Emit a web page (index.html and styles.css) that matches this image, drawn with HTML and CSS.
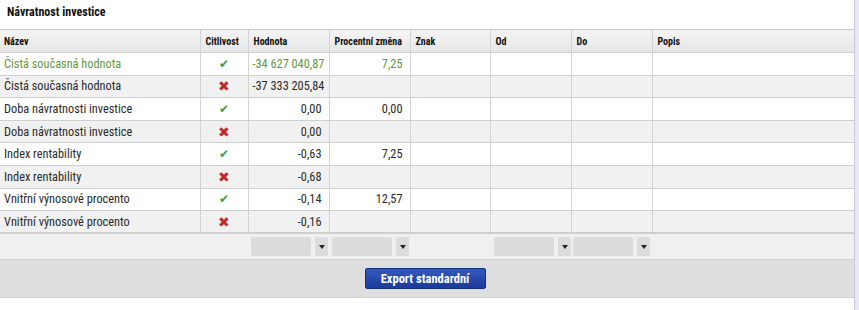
FILE: index.html
```html
<!DOCTYPE html>
<html lang="cs">
<head>
<meta charset="utf-8">
<link rel="stylesheet" href="styles.css">
</head>
<body>
<div class="page">
  <div class="panel">
    <h1 class="title">Návratnost investice</h1>
    <table class="grid">
      <colgroup>
        <col class="c-name"><col class="c-cit"><col class="c-val"><col class="c-pct"><col class="c-znak"><col class="c-od"><col class="c-do"><col class="c-popis">
      </colgroup>
      <thead>
        <tr><th>Název</th><th>Citlivost</th><th>Hodnota</th><th>Procentní změna</th><th>Znak</th><th>Od</th><th>Do</th><th>Popis</th></tr>
      </thead>
      <tbody>
        <tr class="hl"><td>Čistá současná hodnota</td><td class="ic"><span class="ok">✔</span></td><td class="num">-34 627 040,87</td><td class="num">7,25</td><td></td><td></td><td></td><td></td></tr>
        <tr><td>Čistá současná hodnota</td><td class="ic"><span class="no">✖</span></td><td class="num">-37 333 205,84</td><td class="num"></td><td></td><td></td><td></td><td></td></tr>
        <tr><td>Doba návratnosti investice</td><td class="ic"><span class="ok">✔</span></td><td class="num">0,00</td><td class="num">0,00</td><td></td><td></td><td></td><td></td></tr>
        <tr><td>Doba návratnosti investice</td><td class="ic"><span class="no">✖</span></td><td class="num">0,00</td><td class="num"></td><td></td><td></td><td></td><td></td></tr>
        <tr><td>Index rentability</td><td class="ic"><span class="ok">✔</span></td><td class="num">-0,63</td><td class="num">7,25</td><td></td><td></td><td></td><td></td></tr>
        <tr><td>Index rentability</td><td class="ic"><span class="no">✖</span></td><td class="num">-0,68</td><td class="num"></td><td></td><td></td><td></td><td></td></tr>
        <tr><td>Vnitřní výnosové procento</td><td class="ic"><span class="ok">✔</span></td><td class="num">-0,14</td><td class="num">12,57</td><td></td><td></td><td></td><td></td></tr>
        <tr><td>Vnitřní výnosové procento</td><td class="ic"><span class="no">✖</span></td><td class="num">-0,16</td><td class="num"></td><td></td><td></td><td></td><td></td></tr>
      </tbody>
    </table>
    <div class="filters">
      <div class="sel s1"><span class="box"></span><span class="arrow"></span></div>
      <div class="sel s2"><span class="box"></span><span class="arrow"></span></div>
      <div class="sel s3"><span class="box"></span><span class="arrow"></span></div>
      <div class="sel s4"><span class="box"></span><span class="arrow"></span></div>
    </div>
    <div class="actions">
      <button class="btn">Export standardní</button>
    </div>
  </div>
</div>
</body>
</html>
```
FILE: styles.css
```css
html, body { margin: 0; padding: 0; background: #fff; }
body {
  font-family: "Roboto Condensed", Roboto, "Liberation Sans", sans-serif;
  font-size: 12.3px;
  color: #222;
}
.page { width: 859px; height: 310px; display: flex; }
.panel { width: 854px; border-right: 1px solid #c8c8d4; box-shadow: 4px 0 0 #e9e9f6; }
.title {
  margin: 0;
  padding: 4px 0 0 7px;
  height: 29px;
  box-sizing: border-box;
  font-size: 12px;
  line-height: 16px;
  font-weight: bold;
  color: #111;
}
.grid {
  width: 854px;
  border-collapse: collapse;
  table-layout: fixed;
}
.c-name { width: 200px; } .c-cit { width: 48px; } .c-val { width: 81px; } .c-pct { width: 81px; }
.c-znak { width: 80px; } .c-od { width: 81px; } .c-do { width: 81px; } .c-popis { width: 202px; }
.grid th {
  height: 23px;
  box-sizing: border-box;
  text-align: left;
  font-size: 10px;
  font-weight: bold;
  padding: 0 5px;
  background: linear-gradient(#f4f4f4, #e6e6e6);
  border-top: 1px solid #cfcfcf;
  border-bottom: 1px solid #cfcfcf;
  border-left: 1px solid #d3d3d3;
  color: #111;
  white-space: nowrap;
}
.grid th:first-child { padding-left: 4px; }
.grid th:first-child, .grid td:first-child { border-left: none; }
.grid td {
  height: 22.6px;
  box-sizing: border-box;
  padding: 0 7px 0 4px;
  border-bottom: 1px solid #d0d0d0;
  border-left: 1px solid #d3d3d3;
  white-space: nowrap;
  color: #2a2a2a;
}
.grid tbody tr:nth-child(even) td { background: #f1f1f1; }
.grid tbody tr:last-child td { border-bottom: 2px solid #cfcfcf; }
.grid tr.hl td { color: #64993a; }
.num { text-align: right; }
.grid td.ic { text-align: center; padding: 0; }
.ok { color: #3aa043; font-size: 12px; }
.no { color: #c4282b; font-size: 14px; }
.filters {
  height: 25px;
  background: #f0f0f0;
  border-bottom: 1px solid #d3d3d3;
  display: flex;
  align-items: center;
  padding-left: 251px;
}
.sel { display: flex; gap: 4px; height: 19px; }
.sel .box { width: 60px; background: #dcdcdc; border-radius: 2px; }
.sel .arrow {
  width: 13px; background: #dcdcdc; border-radius: 2px;
  display: flex; align-items: center; justify-content: center;
}
.sel .arrow::before {
  content: "";
  border-left: 3px solid transparent;
  border-right: 3px solid transparent;
  border-top: 4px solid #222;
}
.s1 { margin-right: 4px; }
.s2 { margin-right: 85px; }
.s3 { margin-right: 2px; }
.actions {
  height: 37px;
  background: #dedede;
  border-bottom: 1px solid #cfcfcf;
  display: flex;
  justify-content: center;
  align-items: center;
}
.btn {
  width: 121px; height: 21px;
  margin-left: -4px;
  border: 1px solid #15307f;
  border-radius: 2px;
  background: linear-gradient(#3459c0, #1c3b9a);
  color: #fff;
  font-family: inherit;
  font-size: 12.5px;
  font-weight: bold;
  padding: 0;
}
```
